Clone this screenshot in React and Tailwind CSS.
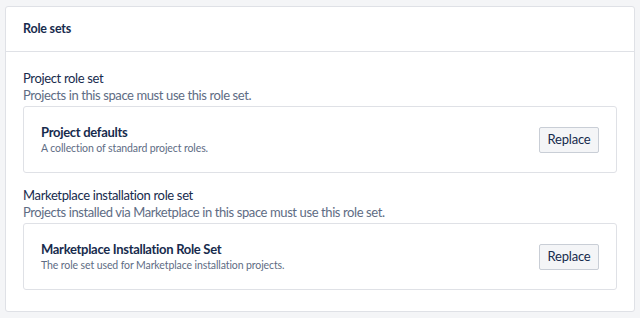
import React from 'react'

const roleSets = [
    {
        label: 'Project role set',
        help: 'Projects in this space must use this role set.',
        name: 'Project defaults',
        description: 'A collection of standard project roles.',
    },
    {
        label: 'Marketplace installation role set',
        help: 'Projects installed via Marketplace in this space must use this role set.',
        name: 'Marketplace Installation Role Set',
        description: 'The role set used for Marketplace installation projects.',
    },
]

const RoleSetRow = ({ item }) => {
    return (
        <div className='flex flex-col'>
            <div className='text-[13px] leading-[17px] tracking-[-0.35px] text-[#172b4d]'>{item.label}</div>
            <div className='text-[13px] leading-[17px] tracking-[-0.4px] text-[#5e6c84]'>{item.help}</div>
            <div className='mt-[2px] flex h-[67px] items-center justify-between rounded-[3px] border border-[#dfe1e6] bg-white pl-[17px] pr-[17px]'>
                <div className='flex flex-col'>
                    <div className='text-[13px] leading-[17px] font-bold tracking-[-0.3px] text-[#172b4d]'>{item.name}</div>
                    <div className='text-[10.5px] leading-[14px] tracking-[-0.1px] text-[#5e6c84]'>{item.description}</div>
                </div>
                <button className='h-[26px] w-[60px] rounded-[2px] border border-[#c9ced6] bg-[#f4f5f7] text-[13px] tracking-[-0.2px] text-[#172b4d]'>
                    Replace
                </button>
            </div>
        </div>
    )
}

export default function App() {
    return (
        <div className='h-[318px] w-[640px] bg-[#f4f5f7] px-[5px] pt-[6px]' style={{ fontFamily: 'Lato, "Liberation Sans", sans-serif' }}>
            <div className='flex flex-col rounded-[3px] border border-[#dfe1e6] bg-white'>
                <div className='flex h-[45px] items-center border-b border-[#dfe1e6] px-[17px]'>
                    <h3 className='text-[12.5px] font-bold tracking-[-0.2px] text-[#172b4d]'>Role sets</h3>
                </div>
                <div className='flex flex-col gap-[14px] px-[17px] pt-[18px] pb-[21px]'>
                    {roleSets.map((item, index) => (
                        <RoleSetRow item={item} key={index} />
                    ))}
                </div>
            </div>
        </div>
    )
}
